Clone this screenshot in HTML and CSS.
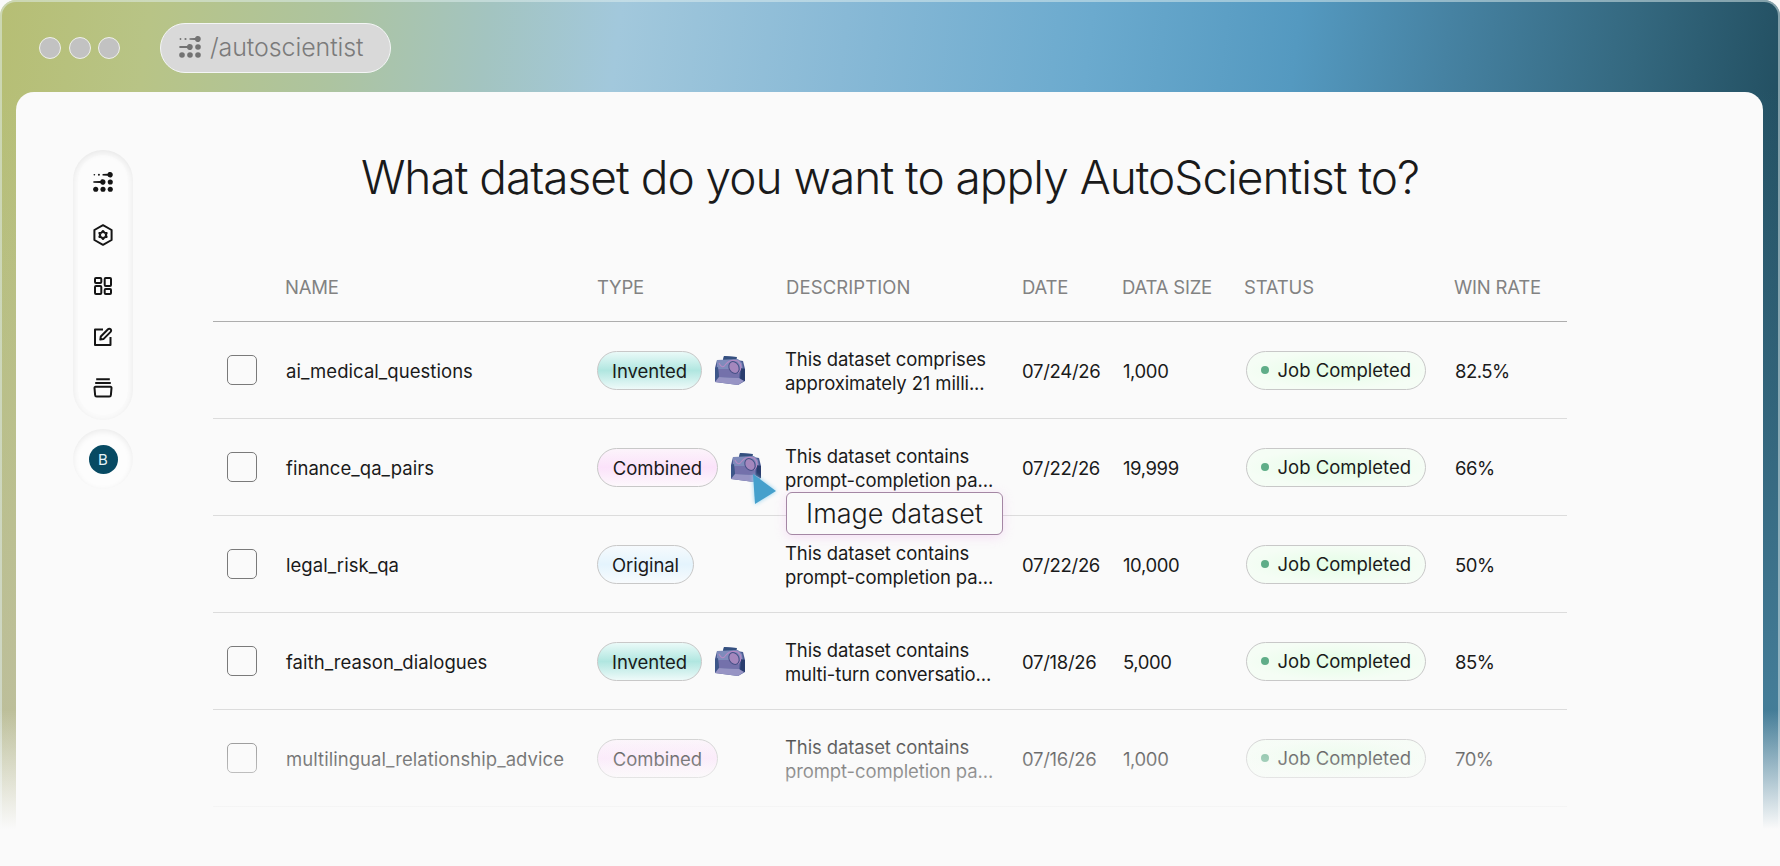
FILE: index.html
```html
<!DOCTYPE html>
<html lang="en">
	<head>
		<meta charset="utf-8" />
		<title>AutoScientist</title>
		<link rel="stylesheet" href="styles.css">
	</head>
	<body>
		<svg class="defs" width="0" height="0">
			<symbol id="logo" viewBox="0 0 22 22">
				<circle cx="1.5" cy="3" r="0.9"/><circle cx="6.5" cy="3" r="1.1"/>
				<path d="M10.5 2.2 L16 1.9 A3 3 0 1 1 16 4.1 L10.5 3.8Z"/>
				<path d="M0.4 10.1 L8 9.9 A3 3 0 1 1 8 12.1 L0.4 11.9Z"/>
				<circle cx="19" cy="11" r="2.8"/>
				<circle cx="3" cy="19" r="2.8"/><circle cx="11" cy="19" r="2.8"/><circle cx="19" cy="19" r="2.8"/>
			</symbol>
			<symbol id="photo" viewBox="0 0 32 30">
				<path d="M9 5 L10 1 L22 2 L23 5 L29 6 L31 14 L31 26 L24 30 L1 27 L1 13 L3 5Z" fill="#4d5c94"/>
				<path d="M9 5 L10 1 L23 2 L22 5Z" fill="#34507f"/>
				<path d="M3 5 L24 4 L28 8 L29 15 L3 15Z" fill="#7f8bbb"/>
				<path d="M4 14 L26 14 L25 23 L5 22Z" fill="#7471ab"/>
				<path d="M1 13 L4 12 L5 22 L1 26Z" fill="#3d5689"/>
				<path d="M27 13 L31 14 L31 26 L26 25Z" fill="#2a3d6e"/>
				<path d="M1 27 L5 22 L25 23 L30 26 L24 30Z" fill="#9794c4"/>
				<path d="M5 8 Q8 15 12 9 Q16 4 24 6 Q30 12 24 18" fill="none" stroke="#b48ac4" stroke-width="1.2"/>
				<ellipse cx="20" cy="12.5" rx="4.8" ry="6.2" transform="rotate(-30 20 12.5)" fill="#a487bd" stroke="#454f86" stroke-width="1"/>
			</symbol>
		</svg>

		<div class="window">
			<header class="topbar">
				<div class="dots"><i></i><i></i><i></i></div>
				<div class="address">
					<svg class="address-logo"><use href="#logo"/></svg>
					<span>/autoscientist</span>
				</div>
			</header>

			<main class="panel">
				<aside class="side">
					<nav class="menu">
						<svg class="home" viewBox="0 0 22 22"><use href="#logo"/></svg>
						<svg viewBox="0 0 22 22" class="line">
							<path d="M11 1.2 L19.6 6 V16 L11 20.8 L2.4 16 V6Z"/>
							<path class="gear" d="M11 7 L12.4 8.7 L14.6 9 L13.8 11 L14.6 13 L12.4 13.3 L11 15 L9.6 13.3 L7.4 13 L8.2 11 L7.4 9 L9.6 8.7Z"/>
						</svg>
						<svg viewBox="0 0 22 22" class="line">
							<rect x="3" y="3" width="6.3" height="5" rx="1"/>
							<rect x="12.7" y="3" width="6.3" height="8" rx="1"/>
							<rect x="3" y="11" width="6.3" height="8" rx="1"/>
							<rect x="12.7" y="14" width="6.3" height="5" rx="1"/>
						</svg>
						<svg viewBox="0 0 22 22" class="line">
							<path d="M11 3.5 H3 V19 H18.5 V11"/>
							<path d="M8.3 13.6 L8.8 10.5 L16 3.3 A1.6 1.6 0 0 1 18.6 5.9 L11.4 13.1Z"/>
						</svg>
						<svg viewBox="0 0 22 22" class="line">
							<path d="M4.2 2.3 H17.8 M3.2 6 H18.8"/>
							<path d="M3.6 9.8 H18.4 Q19.6 9.8 19.5 11 L18.9 18 Q18.8 19.6 17.3 19.6 H4.7 Q3.2 19.6 3.1 18 L2.5 11 Q2.4 9.8 3.6 9.8Z"/>
						</svg>
					</nav>
					<div class="user"><span>B</span></div>
				</aside>

				<section class="content">
					<h1>What dataset do you want to apply AutoScientist to?</h1>

					<div class="table">
						<div class="row head">
							<span></span><span>NAME</span><span>TYPE</span><span class="wide">DESCRIPTION</span>
							<span>DATE</span><span>DATA SIZE</span><span>STATUS</span><span>WIN RATE</span>
						</div>
						<div class="row">
							<i class="check"></i>
							<span class="name">ai_medical_questions</span>
							<div class="type"><b class="tag invented">Invented</b><svg class="photo"><use href="#photo"/></svg></div>
							<p>This dataset comprises<br>approximately 21 milli...</p>
							<span class="date">07/24/26</span>
							<span class="size">1,000</span>
							<b class="status">Job Completed</b>
							<span class="rate">82.5%</span>
						</div>
						<div class="row">
							<i class="check"></i>
							<span class="name">finance_qa_pairs</span>
							<div class="type">
								<b class="tag combined">Combined</b><svg class="photo"><use href="#photo"/></svg>
								<svg class="cursor" viewBox="0 0 28 36"><path d="M3 3 L26 20 L5 33Z"/></svg>
								<div class="tooltip">Image dataset</div>
							</div>
							<p>This dataset contains<br>prompt-completion pa...</p>
							<span class="date">07/22/26</span>
							<span class="size">19,999</span>
							<b class="status">Job Completed</b>
							<span class="rate">66%</span>
						</div>
						<div class="row">
							<i class="check"></i>
							<span class="name">legal_risk_qa</span>
							<div class="type"><b class="tag original">Original</b></div>
							<p>This dataset contains<br>prompt-completion pa...</p>
							<span class="date">07/22/26</span>
							<span class="size">10,000</span>
							<b class="status">Job Completed</b>
							<span class="rate">50%</span>
						</div>
						<div class="row">
							<i class="check"></i>
							<span class="name">faith_reason_dialogues</span>
							<div class="type"><b class="tag invented">Invented</b><svg class="photo"><use href="#photo"/></svg></div>
							<p>This dataset contains<br>multi-turn conversatio...</p>
							<span class="date">07/18/26</span>
							<span class="size">5,000</span>
							<b class="status">Job Completed</b>
							<span class="rate">85%</span>
						</div>
						<div class="row">
							<i class="check"></i>
							<span class="name">multilingual_relationship_advice</span>
							<div class="type"><b class="tag combined">Combined</b></div>
							<p>This dataset contains<br>prompt-completion pa...</p>
							<span class="date">07/16/26</span>
							<span class="size">1,000</span>
							<b class="status">Job Completed</b>
							<span class="rate">70%</span>
						</div>
					</div>
				</section>
			</main>
			<div class="fade"></div>
		</div>
	</body>
</html>
```
FILE: styles.css
```css
* {
	padding: 0;
	margin: 0;
	box-sizing: border-box;
}

body {
	height: 866px;
	overflow: hidden;
	background: #fafafa;
	color: #1a1a1a;
	font-family: Inter, "Liberation Sans", sans-serif;
	font-size: 18.5px;
}

.defs {
	position: absolute;
}

.window {
	position: relative;
	height: 866px;
	padding: 0 17px 0 16px;
	border-radius: 16px 16px 0 0;
	background:
		linear-gradient(to bottom, rgba(84,153,192,0) 90px, rgba(72,130,158,.9) 700px) right / 20px 100% no-repeat,
		linear-gradient(to bottom, rgba(190,190,160,0) 90px, rgba(190,190,160,.8) 700px) left / 20px 100% no-repeat,
		linear-gradient(97deg, #b6be74 0%, #b8c486 8%, #adc4a0 18%, #a3c4c0 26%, #a2c8dc 33%, #88b9d6 45%, #6baace 58%, #5499c0 69%, #4682a2 77%, #34687f 87%, #1f4a5b 97%);
}

/* light rim round the window */
.window::before {
	content: "";
	position: absolute;
	inset: 0;
	border: 2px solid rgba(225,240,240,.5);
	border-bottom: 0;
	border-radius: 16px 16px 0 0;
}

.topbar {
	display: flex;
	align-items: center;
	height: 92px;
	padding: 4px 0 0 23px;
}

.dots {
	display: flex;
	gap: 7.5px;
}

.dots i {
	width: 22px;
	height: 22px;
	border: 1px solid #f0f1ec;
	border-radius: 50%;
	background: #c2c2c2;
}

.address {
	display: flex;
	align-items: center;
	width: 231px;
	height: 50px;
	margin-left: 40px;
	padding: 0 0 2px 18px;
	border: 1px solid #f4f6f6;
	border-radius: 25px;
	background: #d9d9d9;
	color: #7b7b7b;
	font-size: 25px;
	font-weight: 300;
	letter-spacing: -.1px;
}

.address-logo {
	width: 22px;
	height: 22px;
	margin-right: 9px;
	fill: #737373;
}

.panel {
	display: flex;
	height: 774px;
	border-radius: 18px 18px 0 0;
	background: #fafafa;
}

.side {
	width: 60px;
	margin: 58px 0 0 57px;
}

.menu {
	display: flex;
	flex-direction: column;
	align-items: center;
	gap: 29px;
	height: 270px;
	padding-top: 22px;
	border-radius: 30px;
	background: #fcfcfc;
	box-shadow: inset 0 2px 6px rgba(0,0,0,.08), inset 0 0 0 5px #fafafa;
}

.menu svg {
	width: 22px;
	height: 22px;
	fill: #151515;
}

.menu .home {
	width: 20px;
	height: 20px;
	margin-bottom: 2.5px;
}

.menu .line {
	fill: none;
	stroke: #151515;
	stroke-width: 2;
	stroke-linejoin: round;
}

.menu .gear {
	stroke-width: 2.1;
}

.user {
	display: flex;
	align-items: center;
	justify-content: center;
	height: 60px;
	margin-top: 9px;
	border-radius: 50%;
	background: #fdfdfd;
	box-shadow: inset 0 2px 6px rgba(0,0,0,.08);
}

.user span {
	width: 29px;
	height: 29px;
	border-radius: 50%;
	background: #074a63;
	color: #e6f4fa;
	font-size: 15px;
	line-height: 29px;
	text-align: center;
}

.content {
	width: 1354px;
	margin-left: 80px;
}

h1 {
	height: 170px;
	padding-top: 55px;
	font-size: 46px;
	font-weight: 300;
	line-height: 60px;
	letter-spacing: -1px;
	text-align: center;
	white-space: nowrap;
}

.row {
	display: grid;
	grid-template-columns: 72px 312px 189px 236px 100px 122px 210px 1fr;
	align-items: center;
	height: 97px;
	border-bottom: 1px solid #dcdcdc;
	white-space: nowrap;
}

.head {
	height: 60px;
	padding-bottom: 9px;
	border-color: #adadad;
	color: #828282;
	font-size: 18.5px;
	letter-spacing: -.2px;
}

.head .wide {
	letter-spacing: .1px;
}

.check {
	width: 30px;
	height: 30px;
	margin-left: 14px;
	border: 1.5px solid #7a7a7a;
	border-radius: 5px;
}

.name,
.date,
.size,
.rate {
	padding-top: 2px;
}

.name {
	padding-left: 1px;
	letter-spacing: .05px;
}

.type {
	position: relative;
	display: flex;
	align-items: center;
	gap: 12px;
}

.tag,
.status {
	height: 39px;
	border: 1px solid #c8c8c8;
	border-radius: 20px;
	font-weight: 400;
	line-height: 38px;
}

.tag {
	text-align: center;
	letter-spacing: -.05px;
}

.invented {
	width: 105px;
	background: linear-gradient(#eafaf8, #b0e6e0 50%, #eefaf9);
}

.combined {
	width: 121px;
	background: linear-gradient(#fcf4fb, #fbe2fa 50%, #fdf8fc);
}

.original {
	width: 97px;
	background: linear-gradient(#f6fafd, #e4f4fd 50%, #f8fbfd);
}

.photo {
	width: 32px;
	height: 30px;
}

.row p {
	padding-top: 1px;
	margin-left: -1px;
	line-height: 24px;
	letter-spacing: -.12px;
}

.date {
	letter-spacing: -.3px;
}

.size {
	padding-left: 1px;
	letter-spacing: -.4px;
}

.status {
	display: flex;
	align-items: center;
	width: 180px;
	margin-left: 2px;
	padding-left: 14px;
	background: radial-gradient(closest-side, #e4fde6, #f5fdf5);
}

.status::before {
	content: "";
	width: 8px;
	height: 8px;
	margin-right: 8.5px;
	border-radius: 50%;
	background: #5fad88;
}

.rate {
	padding-left: 1px;
	letter-spacing: -.5px;
}

.cursor {
	position: absolute;
	left: 153px;
	top: 23px;
	z-index: 2;
	width: 28px;
	height: 36px;
	fill: #45a0cc;
	filter: drop-shadow(0 0 2px #8fd0ee);
}

.tooltip {
	position: absolute;
	left: 189px;
	top: 44px;
	z-index: 2;
	width: 217px;
	height: 43px;
	border: 1px solid #a487a4;
	border-radius: 6px;
	background: #fafafa;
	box-shadow: 0 2px 12px rgba(235,160,235,.3);
	font-size: 27px;
	font-weight: 300;
	line-height: 41px;
	text-align: center;
}

.fade {
	position: absolute;
	left: 0;
	right: 0;
	bottom: 0;
	z-index: 3;
	height: 156px;
	background: linear-gradient(rgba(250,250,250,0), #fafafa 119px);
}
```
